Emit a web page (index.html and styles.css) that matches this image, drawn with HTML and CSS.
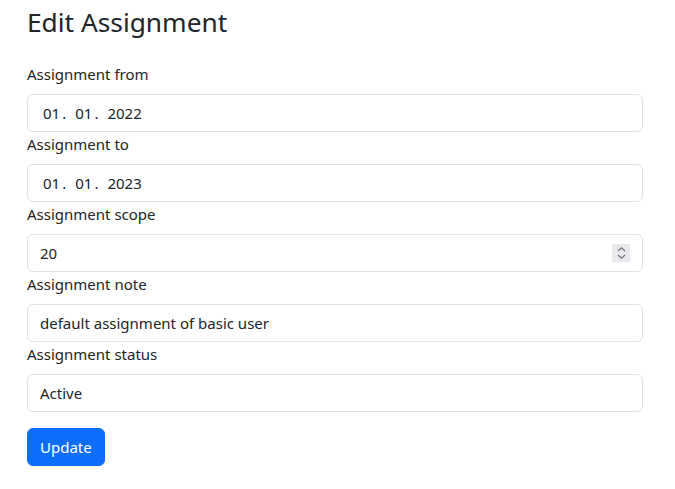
FILE: index.html
```html
<!DOCTYPE html>
<html lang="en">
<head>
<meta charset="utf-8">
<title>Edit Assignment</title>
<link rel="stylesheet" href="styles.css">
</head>
<body>
<main class="page">
  <h2 class="title">Edit Assignment</h2>
  <form class="form">
    <label class="label" for="from">Assignment from</label>
    <div class="control date" id="from"><span>01</span><span class="dot">.</span><span>01</span><span class="dot">.</span><span>2022</span></div>

    <label class="label" for="to">Assignment to</label>
    <div class="control date" id="to"><span>01</span><span class="dot">.</span><span>01</span><span class="dot">.</span><span>2023</span></div>

    <label class="label" for="scope">Assignment scope</label>
    <div class="num-field">
      <input class="control" id="scope" type="text" value="20">
      <span class="spinner" aria-hidden="true">
        <svg width="9" height="14" viewBox="0 0 9 14"><path d="M1 5 L4.5 1.8 L8 5" fill="none" stroke="#6e6e78" stroke-width="1.1"/><path d="M1 9 L4.5 12.2 L8 9" fill="none" stroke="#6e6e78" stroke-width="1.1"/></svg>
      </span>
    </div>

    <label class="label" for="note">Assignment note</label>
    <input class="control" id="note" type="text" value="default assignment of basic user">

    <label class="label" for="status">Assignment status</label>
    <input class="control" id="status" type="text" value="Active">

    <button class="btn" type="submit">Update</button>
  </form>
</main>
</body>
</html>
```

FILE: styles.css
```css
* { box-sizing: border-box; }
html, body { margin: 0; padding: 0; background: #fff; }
body {
  font-family: "Noto Sans", "Open Sans", sans-serif;
  font-size: 16px;
  line-height: 24px;
  color: #212529;
}
.page {
  width: 643px;
  padding-left: 27px;
  padding-top: 6px;
}
.title {
  margin: 0;
  font-size: 26.3px;
  line-height: 32px;
  font-weight: 400;
}
.form {
  display: flex;
  flex-direction: column;
  align-items: flex-start;
  margin-top: 24px;
}
.label {
  display: block;
  margin-bottom: 8px;
  font-size: 15px;
}
.control {
  display: block;
  width: 616px;
  height: 38px;
  padding: 6px 12px;
  font-family: inherit;
  font-size: 15px;
  line-height: 24px;
  color: #212529;
  background: #fff;
  border: 1px solid #dee2e6;
  border-radius: 6px;
  outline: none;
}
.date {
  display: flex;
  align-items: center;
  padding-left: 15px;
  font-size: 15px;
}
.date .dot { margin: 0 9px 0 2px; }
.num-field { position: relative; }
.spinner {
  position: absolute;
  right: 13px;
  top: 10px;
  width: 18px;
  height: 18px;
  background: #e9e9ed;
  display: flex;
  align-items: center;
  justify-content: center;
}
.btn {
  margin-top: 16px;
  height: 38px;
  padding: 6px 12px;
  font-family: inherit;
  font-size: 15px;
  line-height: 24px;
  color: #fff;
  background: #0d6efd;
  border: 1px solid #0d6efd;
  border-radius: 6px;
}
```
